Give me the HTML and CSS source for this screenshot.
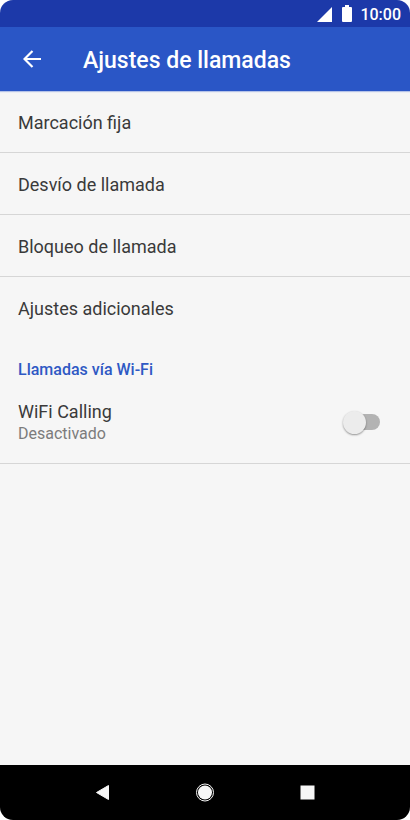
FILE: index.html
```html
<!DOCTYPE html>
<html lang="es">
<head>
<meta charset="utf-8">
<meta name="viewport" content="width=device-width, initial-scale=1">
<title>Ajustes de llamadas</title>
<link rel="stylesheet" href="styles.css">
</head>
<body>
<div class="phone">
  <div class="status-bar">
    <div class="status-icons">
      <svg width="15" height="15" viewBox="0 0 15 15" aria-hidden="true"><path d="M15 0v15H0z" fill="currentColor"/></svg>
      <svg width="10" height="17" viewBox="0 0 10 17" aria-hidden="true"><path d="M3 0h4v2h2q1 0 1 1v13q0 1-1 1H1q-1 0-1-1V3q0-1 1-1h2z" fill="currentColor"/></svg>
    </div>
    <time class="clock">10:00</time>
  </div>
  <header class="app-bar">
    <button class="back" type="button" aria-label="Atrás">
      <svg width="18" height="18" viewBox="0 0 18 18" aria-hidden="true"><path d="M18 9H1.500M9.500 1 1.500 9l8 8" fill="none" stroke="currentColor" stroke-width="2.200"/></svg>
    </button>
    <h1 class="title">Ajustes de llamadas</h1>
  </header>
  <main class="content">
    <ul class="list">
      <li class="item"><a class="link" href="#">Marcación fija</a></li>
      <li class="item"><a class="link" href="#">Desvío de llamada</a></li>
      <li class="item"><a class="link" href="#">Bloqueo de llamada</a></li>
      <li class="item"><a class="link" href="#">Ajustes adicionales</a></li>
    </ul>
    <h2 class="section">Llamadas vía Wi-Fi</h2>
    <div class="setting">
      <label class="setting-text" for="wifi-calling">
        <span class="setting-name">WiFi Calling</span>
        <span class="setting-state">Desactivado</span>
      </label>
      <input class="switch" id="wifi-calling" type="checkbox" role="switch">
    </div>
  </main>
  <nav class="nav-bar">
    <button class="nav-button" type="button" aria-label="Volver">
      <svg width="19" height="19" viewBox="0 0 19 19" aria-hidden="true"><path d="M15.500 2.500v14L3.500 9.500z" fill="currentColor" stroke="currentColor" stroke-width="1" stroke-linejoin="round"/></svg>
    </button>
    <button class="nav-button" type="button" aria-label="Inicio">
      <svg width="19" height="19" viewBox="0 0 19 19" aria-hidden="true"><circle cx="9" cy="9.500" r="7" fill="currentColor"/><circle cx="9" cy="9.500" r="8.500" fill="none" stroke="currentColor" stroke-width="1"/></svg>
    </button>
    <button class="nav-button" type="button" aria-label="Recientes">
      <svg width="19" height="19" viewBox="0 0 19 19" aria-hidden="true"><path d="M2.500 2.500h14v14h-14z" fill="currentColor"/></svg>
    </button>
  </nav>
</div>
</body>
</html>
```
FILE: styles.css
```css
* {
  box-sizing: border-box;
}

body {
  margin: 0;
  background: #fff;
  color: #3a3a3a;
  font-family: Roboto, "Liberation Sans", sans-serif;
}

button {
  display: flex;
  align-items: center;
  justify-content: center;
  padding: 0;
  border: 0;
  background: none;
  color: inherit;
}

.phone {
  display: flex;
  flex-direction: column;
  min-height: 100vh;
  overflow: hidden;
  border-radius: 13px;
  background: #f6f6f6;
}

.status-bar {
  display: flex;
  align-items: flex-end;
  justify-content: flex-end;
  gap: 8px;
  height: 27px;
  padding: 0 9px 2px;
  background: #1c39a9;
  color: #fff;
}

.status-icons {
  display: flex;
  align-items: flex-end;
  gap: 10px;
  padding-bottom: 3px;
}

.clock {
  font-size: 16px;
  font-weight: 500;
  line-height: 20px;
}

.app-bar {
  display: flex;
  align-items: center;
  height: 64px;
  padding: 0 20px;
  background: #2a56c6;
  box-shadow: 0 1px 1px #b5c3e8;
  color: #fff;
}

.back {
  width: 24px;
  height: 40px;
}

.title {
  margin: 0 0 0 39px;
  padding-top: 4px;
  font-size: 23px;
  font-weight: 500;
  line-height: 28px;
}

.content {
  flex: 1;
}

.list {
  margin: 0;
  padding: 0;
  list-style: none;
}

.item {
  border-bottom: 1px solid #d6d6d6;
}

.item:last-child {
  border-bottom: 0;
}

.link {
  display: block;
  padding: 20px 18px 17px;
  color: inherit;
  font-size: 18px;
  line-height: 24px;
  text-decoration: none;
}

.section {
  margin: 0;
  padding: 22px 18px 20px;
  color: #2f59c4;
  font-size: 16px;
  font-weight: 500;
  line-height: 20px;
}

.setting {
  display: flex;
  align-items: center;
  justify-content: space-between;
  padding: 0 30px 19px 18px;
  border-bottom: 1px solid #d6d6d6;
}

.setting-text {
  display: flex;
  flex-direction: column;
}

.setting-name {
  font-size: 18px;
  line-height: 24px;
}

.setting-state {
  color: #7c7c7c;
  font-size: 16px;
  line-height: 20px;
}

.switch {
  display: flex;
  align-items: center;
  width: 34px;
  height: 16px;
  margin: 0;
  border-radius: 8px;
  background: #b3b3b3;
  appearance: none;
}

.switch::before {
  content: "";
  flex: none;
  width: 23px;
  height: 23px;
  margin-left: -3px;
  border-radius: 50%;
  background: #ececec;
  box-shadow: 0 1px 2px rgba(0, 0, 0, 0.4);
}

.switch:checked {
  justify-content: flex-end;
  background: #94aae2;
}

.switch:checked::before {
  margin-right: -3px;
  background: #2a56c6;
}

.nav-bar {
  display: grid;
  grid-template-columns: repeat(3, 1fr);
  height: 55px;
  padding: 0 12.5%;
  background: #000;
  color: #f7f7f7;
}
```
